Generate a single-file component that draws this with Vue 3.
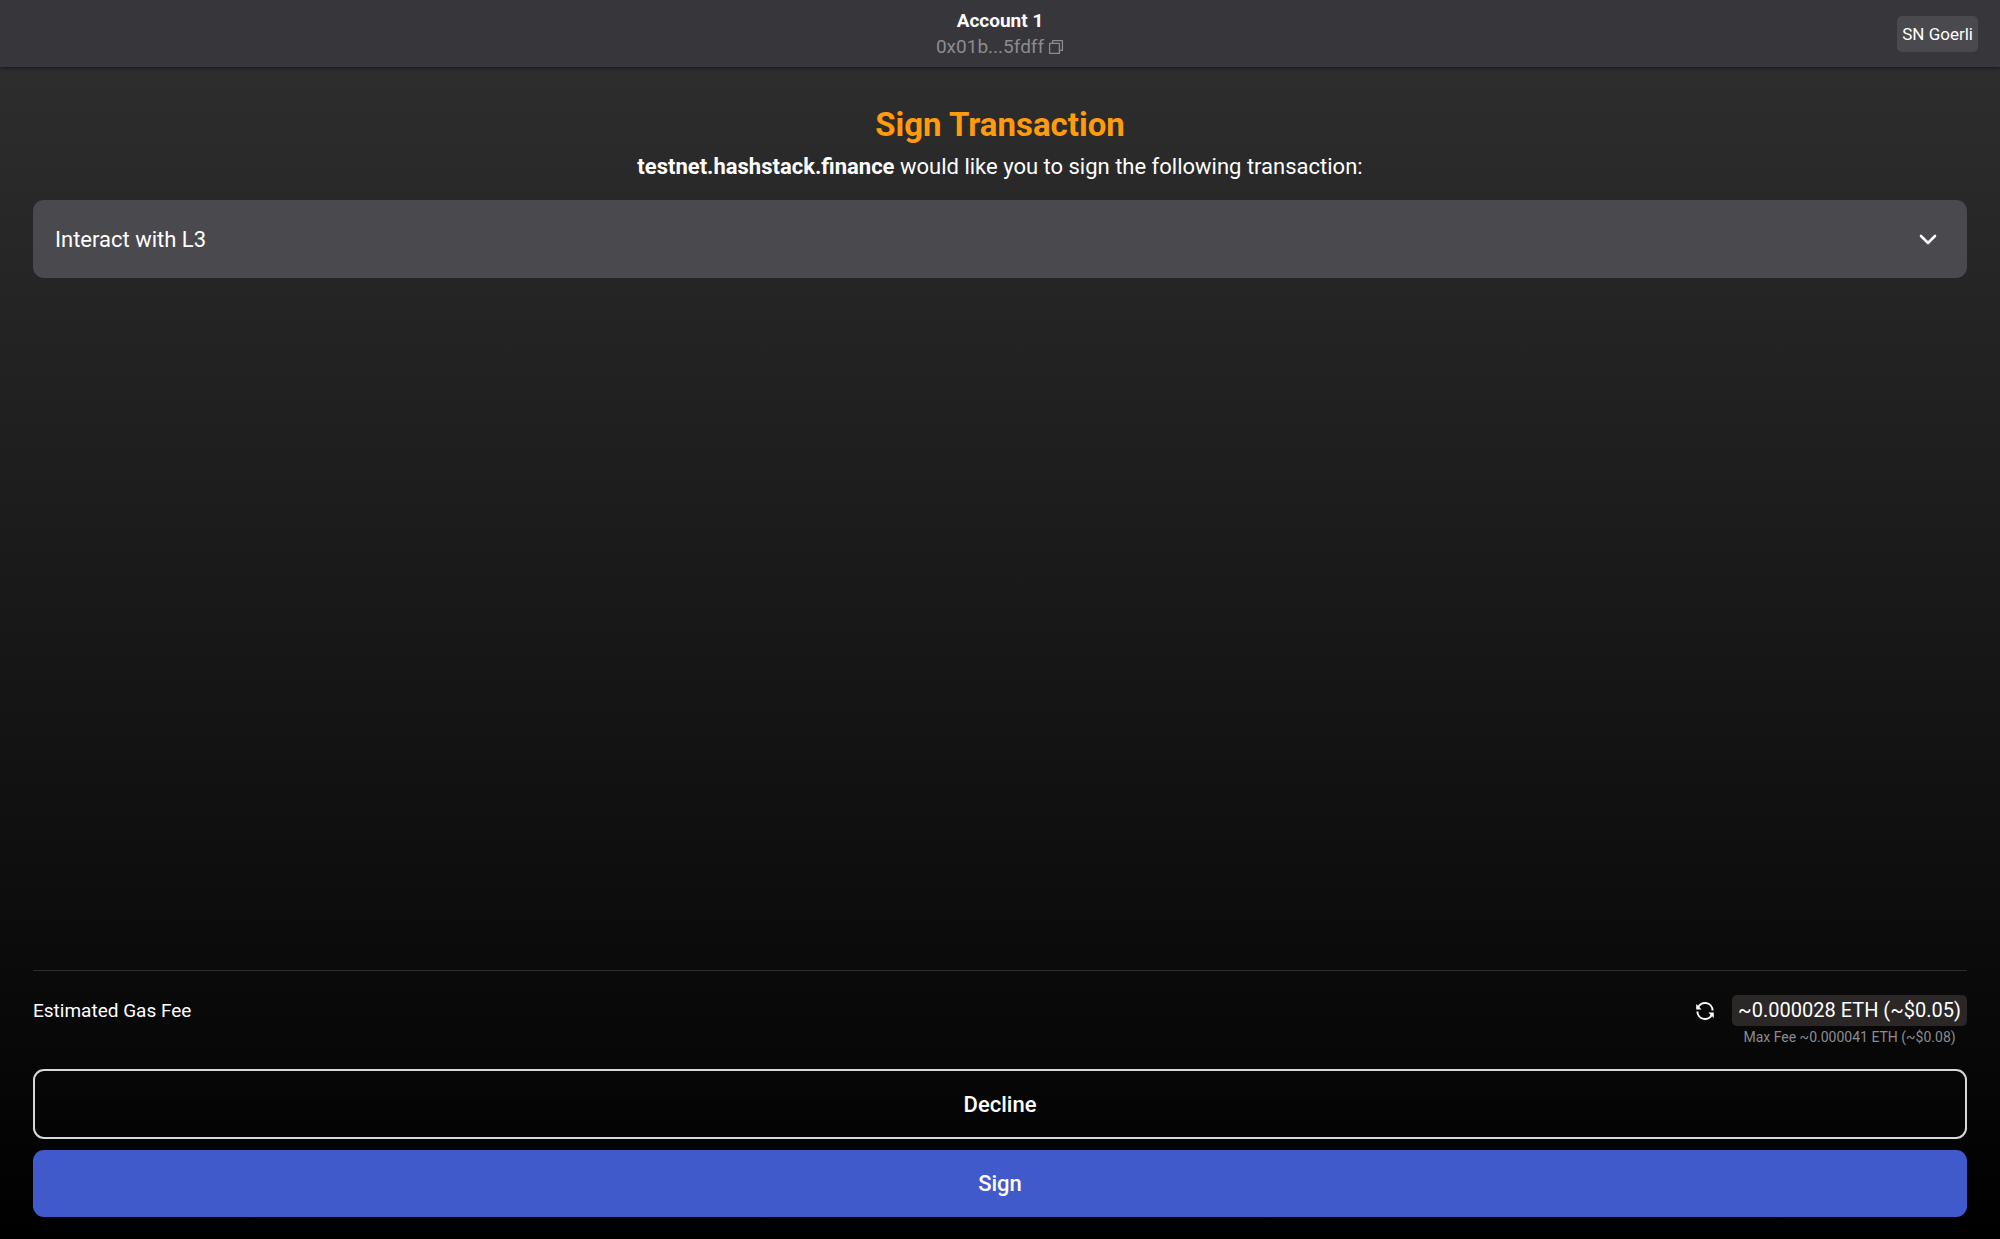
<script setup>
import { ref } from 'vue'

const account = { name: 'Account 1', address: '0x01b...5fdff' }
const network = 'SN Goerli'
const origin = 'testnet.hashstack.finance'
const fee = { estimate: '~0.000028 ETH (~$0.05)', max: 'Max Fee ~0.000041 ETH (~$0.08)' }
const expanded = ref(false)
</script>

<template>
  <div class="page">
    <header class="topbar">
      <div class="account">
        <strong class="account-name">{{ account.name }}</strong>
        <button class="address" type="button">
          {{ account.address }}
          <svg class="copy" viewBox="0 0 16 16" aria-hidden="true">
            <path d="M1.6 4.4h9.8v10H1.6z" />
            <path d="M4.6 4.4V1.6h9.8v9.8h-3" />
          </svg>
        </button>
      </div>
      <button class="network" type="button">{{ network }}</button>
    </header>

    <main class="content">
      <h1 class="title">Sign Transaction</h1>
      <p class="lead"><b>{{ origin }}</b> would like you to sign the following transaction:</p>
      <button class="call" type="button" :aria-expanded="expanded" @click="expanded = !expanded">
        <span>Interact with L3</span>
        <svg class="chevron" viewBox="0 0 18 12" aria-hidden="true"><path d="M2 3l7 7 7-7" /></svg>
      </button>
    </main>

    <footer class="footer">
      <div class="gas">
        <span class="gas-label">Estimated Gas Fee</span>
        <div class="gas-value">
          <button class="refresh" type="button" aria-label="Refresh fee">
            <svg viewBox="0 0 20 20" aria-hidden="true">
              <path class="arc" d="M3 6.6A7.6 7.6 0 0 1 17.6 9.6M17 13.4A7.6 7.6 0 0 1 2.4 10.4" />
              <path class="head" d="M1.2 3v5.4h5.4zM18.8 17v-5.4h-5.4z" />
            </svg>
          </button>
          <div class="fees">
            <span class="estimate">{{ fee.estimate }}</span>
            <small class="max">{{ fee.max }}</small>
          </div>
        </div>
      </div>
      <button class="action decline" type="button">Decline</button>
      <button class="action sign" type="button">Sign</button>
    </footer>
  </div>
</template>

<style>
body {
  background: #000;
}
</style>

<style scoped>
.page {
  display: flex;
  flex-direction: column;
  min-height: 100vh;
  background: linear-gradient(#303030, #000);
  color: #fff;
  font-family: Roboto, "Liberation Sans", sans-serif;
}

button {
  margin: 0;
  padding: 0;
  border: 0;
  background: none;
  color: inherit;
  font: inherit;
  cursor: pointer;
}

.topbar {
  display: grid;
  grid-template-columns: 1fr auto 1fr;
  align-items: center;
  height: 67px;
  padding: 0 22px;
  background: #37363b;
  box-shadow: 0 1px 4px rgba(0, 0, 0, 0.5);
}

.account {
  grid-column: 2;
  display: flex;
  flex-direction: column;
  align-items: center;
}

.account-name {
  font-size: 19px;
  font-weight: 700;
  line-height: 26px;
}

.address {
  display: flex;
  align-items: center;
  gap: 4px;
  color: #8c8c8e;
  font-size: 19px;
  line-height: 26px;
}

.copy {
  width: 16px;
  height: 16px;
  fill: none;
  stroke: currentColor;
  stroke-width: 1.3;
  stroke-linejoin: round;
}

.network {
  justify-self: end;
  padding: 0 5px;
  border-radius: 5px;
  background: #4a494e;
  font-size: 17px;
  line-height: 36px;
}

.content {
  flex: 1;
  padding: 39px 33px 0;
}

.title {
  margin: 0;
  color: #ff9b0d;
  font-size: 33px;
  font-weight: 700;
  line-height: 38px;
  text-align: center;
}

.lead {
  margin: 8px 0 18px;
  font-size: 22px;
  line-height: 30px;
  text-align: center;
}

.call {
  display: flex;
  align-items: center;
  justify-content: space-between;
  width: 100%;
  height: 78px;
  padding: 0 30px 0 22px;
  border-radius: 11px;
  background: #4a494e;
  font-size: 22px;
}

.chevron {
  width: 18px;
  height: 12px;
  fill: none;
  stroke: currentColor;
  stroke-width: 2.6;
  stroke-linecap: round;
}

.footer {
  display: flex;
  flex-direction: column;
  padding: 0 33px 22px;
}

.gas {
  display: flex;
  justify-content: space-between;
  align-items: flex-start;
  margin-bottom: 21px;
  padding-top: 24px;
  border-top: 1px solid #2e2e2e;
}

.gas-label {
  font-size: 19px;
  line-height: 31px;
}

.gas-value {
  display: flex;
  align-items: flex-start;
  gap: 17px;
}

.refresh {
  display: flex;
  align-items: center;
  height: 31px;
}

.refresh svg {
  width: 20px;
  height: 20px;
}

.arc {
  fill: none;
  stroke: currentColor;
  stroke-width: 2;
}

.head {
  fill: currentColor;
}

.fees {
  display: flex;
  flex-direction: column;
  align-items: center;
}

.estimate {
  padding: 0 6px;
  border-radius: 5px;
  background: #2b2727;
  font-size: 20px;
  line-height: 31px;
}

.max {
  color: #8c8c8e;
  font-size: 14px;
  line-height: 22px;
}

.action {
  border-radius: 11px;
  font-size: 22px;
  font-weight: 500;
}

.decline {
  height: 70px;
  margin-bottom: 11px;
  border: 2px solid #d8d8d8;
}

.sign {
  height: 67px;
  background: #415acb;
}
</style>
